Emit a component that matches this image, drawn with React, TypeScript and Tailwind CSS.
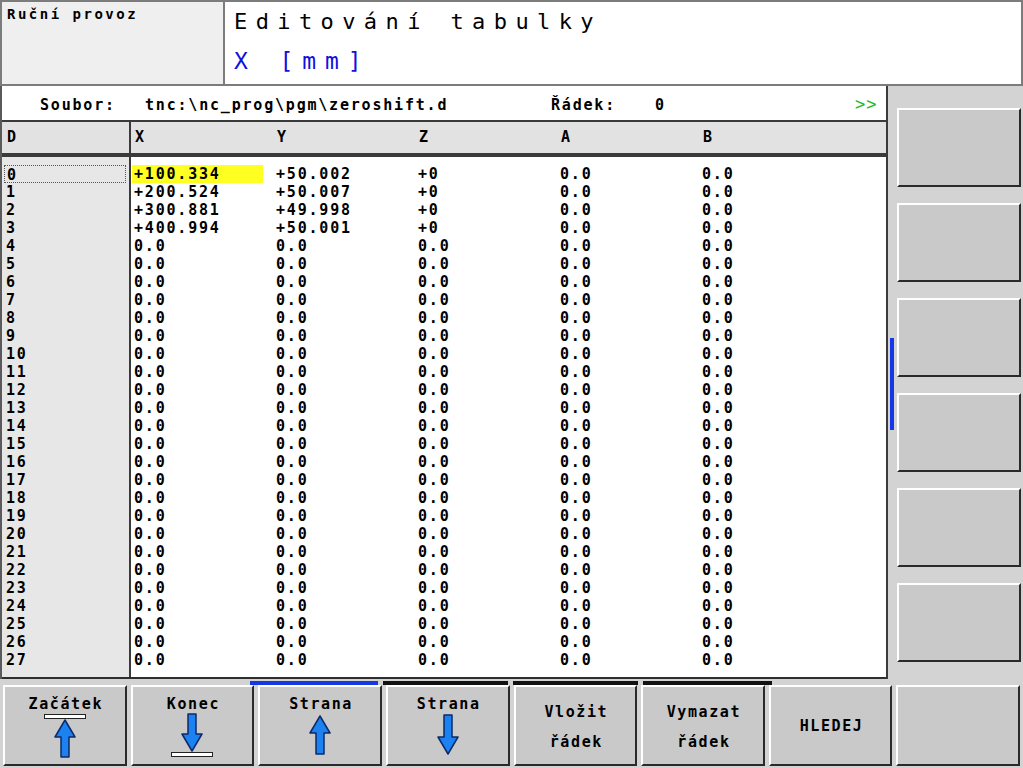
import React from "react";

const F = "font-['DejaVu_Sans_Mono',monospace]";

type Row = [string, string, string, string, string];
const rows: Row[] = [
  ["+100.334", "+50.002", "+0", "0.0", "0.0"],
  ["+200.524", "+50.007", "+0", "0.0", "0.0"],
  ["+300.881", "+49.998", "+0", "0.0", "0.0"],
  ["+400.994", "+50.001", "+0", "0.0", "0.0"],
];
for (let i = 4; i < 28; i++) rows.push(["0.0", "0.0", "0.0", "0.0", "0.0"]);

function ArrowUp({ h }: { h: number }) {
  return (
    <svg width="22" height={h} viewBox={`0 0 22 ${h}`}>
      <polygon
        points={`11,1 21,18 15,18 15,${h - 1} 7,${h - 1} 7,18 1,18`}
        fill="#1c82f2"
        stroke="#0d2a66"
        strokeWidth="1.5"
        strokeLinejoin="round"
      />
    </svg>
  );
}

function ArrowDown({ h }: { h: number }) {
  return (
    <svg width="22" height={h} viewBox={`0 0 22 ${h}`}>
      <polygon
        points={`11,${h - 1} 21,${h - 18} 15,${h - 18} 15,1 7,1 7,${h - 18} 1,${h - 18}`}
        fill="#1c82f2"
        stroke="#0d2a66"
        strokeWidth="1.5"
        strokeLinejoin="round"
      />
    </svg>
  );
}

function Bar() {
  return (
    <svg width="42" height="5" viewBox="0 0 42 5">
      <rect x="0.5" y="0.5" width="41" height="4" fill="#ffffff" stroke="#222" strokeWidth="1" />
    </svg>
  );
}

const keyCls =
  "bg-[#c9c9c9] border-t-2 border-l-2 border-t-white border-l-white border-b-2 border-r-2 border-b-[#2a2a2a] border-r-[#2a2a2a]";

export default function App() {
  return (
    <div className={`w-[1023px] h-[768px] bg-[#d3d3d3] flex flex-col overflow-hidden ${F} text-black`}>
      {/* Header */}
      <div className="h-[86px] flex border-2 border-[#7c7c7c]">
        <div className="w-[223px] bg-[#efefef] border-r-2 border-[#7c7c7c] pl-[5px] pt-[3px] text-[14px] font-bold leading-[18px] tracking-[2.5px]">
          Ruční provoz
        </div>
        <div className="flex-1 bg-white pl-[9px] pt-[3px] text-[22px] tracking-[8.4px]">
          <div className="leading-[34px]">Editování tabulky</div>
          <div className="leading-[34px] mt-[5px] text-[#1010e0] text-[23px] tracking-[8.9px]">X [mm]</div>
        </div>
      </div>

      {/* Middle */}
      <div className="flex h-[593px]">
        <div className="w-[888px] flex flex-col border-r-2 border-[#3a3a3a] border-l-2 border-l-[#5a5a5a]">
          {/* File row */}
          <div className="h-[34px] bg-white flex items-center font-bold text-[15px] tracking-[1.8px] pt-[4px]">
            <span className="ml-[38px] w-[105px]">Soubor:</span>
            <span className="w-[406px]">tnc:\nc_prog\pgm\zeroshift.d</span>
            <span className="w-[104px]">Řádek:</span>
            <span className="w-[200px]">0</span>
            <span className="text-[#22bb22] text-[17px] tracking-[1px] font-normal">&gt;&gt;</span>
          </div>
          {/* Table */}
          <div className="flex-1 flex flex-col border-b-2 border-[#2e2e2e]">
            <div className="h-[37px] flex bg-[#e2e2e2] border-t-2 border-[#3a3a3a] border-b-[4px] border-b-[#3a3a3a] font-bold text-[15px] tracking-[1.8px] items-center">
              <div className="w-[129px] h-full border-r-2 border-[#3a3a3a] pl-[5px] flex items-center">D</div>
              {["X", "Y", "Z", "A", "B"].map((c) => (
                <div key={c} className="w-[142px] pl-[4px]">
                  {c}
                </div>
              ))}
            </div>
            <div className="flex-1 flex">
              <div className="w-[129px] bg-[#e7e7e7] border-r-2 border-[#3a3a3a] pt-[8px] pl-[2px] font-bold text-[15px] tracking-[1.8px]">
                {rows.map((_, i) => (
                  <div
                    key={i}
                    className={`h-[18px] leading-[18px] pl-[2px] w-[122px] ${
                      i === 0 ? "border border-dotted border-[#555] leading-[16px]" : ""
                    }`}
                  >
                    {i}
                  </div>
                ))}
              </div>
              <div className="flex-1 bg-white pt-[8px] font-bold text-[15px] tracking-[1.8px]">
                {rows.map((r, i) => (
                  <div key={i} className="flex h-[18px] leading-[18px]">
                    {r.map((v, j) => (
                      <div key={j} className={`w-[142px] ${j === 0 ? "pl-[1px]" : "pl-[3px]"}`}>
                        {i === 0 && j === 0 ? (
                          <span className="inline-block w-[131px] bg-[#ffff22] pl-[2px]">{v}</span>
                        ) : (
                          <span className={j === 0 ? "pl-[2px]" : ""}>{v}</span>
                        )}
                      </div>
                    ))}
                  </div>
                ))}
              </div>
            </div>
          </div>
        </div>
        {/* Sidebar */}
        <div className="flex-1 flex">
          <div className="w-[9px] pt-[252px]">
            <div className="w-[4px] h-[92px] ml-[2px] bg-[#1438e6]" />
          </div>
          <div className="w-[124px] flex flex-col gap-[16px] pt-[22px]">
            {[0, 1, 2, 3, 4, 5].map((k) => (
              <div key={k} className={`h-[79px] ${keyCls}`} />
            ))}
          </div>
        </div>
      </div>

      {/* Bottom */}
      <div className="flex-1 flex flex-col">
        <div className="h-[6px] flex pt-[2px]">
          <div className="ml-[250px] w-[128px] h-[4px] bg-[#1438e6]" />
          <div className="ml-[5px] w-[125px] h-[4px] bg-[#111]" />
          <div className="ml-[5px] w-[125px] h-[4px] bg-[#111]" />
          <div className="ml-[5px] w-[129px] h-[4px] bg-[#111]" />
        </div>
        <div className="h-[81px] grid grid-cols-8 gap-[4px] px-[3px] font-bold text-[15px] tracking-[1.6px]">
          <div className={`${keyCls} flex flex-col items-center pt-[8px]`}>
            <div className="leading-[18px] pl-[2px]">Začátek</div>
            <div className="mt-[1px]"><Bar /></div>
            <ArrowUp h={39} />
          </div>
          <div className={`${keyCls} flex flex-col items-center pt-[8px]`}>
            <div className="leading-[18px] pl-[2px]">Konec</div>
            <ArrowDown h={39} />
            <Bar />
          </div>
          <div className={`${keyCls} flex flex-col items-center pt-[8px]`}>
            <div className="leading-[18px] pl-[2px]">Strana</div>
            <div className="mt-[2px]"><ArrowUp h={40} /></div>
          </div>
          <div className={`${keyCls} flex flex-col items-center pt-[8px]`}>
            <div className="leading-[18px] pl-[2px]">Strana</div>
            <div className="mt-[1px]"><ArrowDown h={41} /></div>
          </div>
          <div className={`${keyCls} flex flex-col items-center pt-[16px]`}>
            <div className="leading-[18px] pl-[2px]">Vložit</div>
            <div className="leading-[18px] pl-[2px] mt-[12px]">řádek</div>
          </div>
          <div className={`${keyCls} flex flex-col items-center pt-[16px]`}>
            <div className="leading-[18px] pl-[2px]">Vymazat</div>
            <div className="leading-[18px] pl-[2px] mt-[12px]">řádek</div>
          </div>
          <div className={`${keyCls} flex items-center justify-center`}>
            <div className="leading-[18px] pl-[2px]">HLEDEJ</div>
          </div>
          <div className={keyCls} />
        </div>
      </div>
    </div>
  );
}
